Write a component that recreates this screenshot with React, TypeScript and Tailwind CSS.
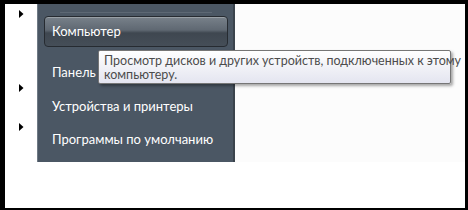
const FONT = { fontFamily: 'Lato, "Noto Sans", "DejaVu Sans", sans-serif' }

const ITEMS = [
  { label: 'Панель управления', h: 'h-[36px]' },
  { label: 'Устройства и принтеры', h: 'h-[34px]' },
  { label: 'Программы по умолчанию', h: 'h-[33px]' },
]

function Arrow({ className }: { className: string }) {
  return (
    <svg width="5" height="8" viewBox="0 0 5 8" className={className}>
      <path d="M0 0 L4.5 4 L0 8 Z" fill="#000" />
    </svg>
  )
}

export default function App() {
  return (
    <div className="w-[468px] h-[210px] bg-black pt-[4px] pl-[5px] pr-[3px] pb-[2px]" style={FONT}>
      <div className="relative w-full h-full bg-white flex items-start">
        {/* стрелки слева */}
        <div className="w-[32px] h-[158px] relative">
          <Arrow className="absolute left-[14px] top-[6px]" />
          <Arrow className="absolute left-[14px] top-[80px]" />
          <Arrow className="absolute left-[14px] top-[119px]" />
        </div>

        {/* тёмная панель меню */}
        <div className="w-[198px] h-[158px] bg-[#4b5764] border-l border-l-[#6f7a85] border-r-2 border-r-[#3a434c] flex flex-col pt-[8px] pl-[6px] pr-[5px]">
          <div className="h-px mx-[16px] bg-[#5d6874]" />
          <div className="mt-[3px] h-[31px] rounded-[4px] border border-[#262b31] bg-[linear-gradient(to_bottom,#78818a_0%,#5f6872_45%,#3f4750_55%,#454e58_100%)] shadow-[inset_0_1px_0_rgba(255,255,255,0.25)] flex items-center pl-[7px]">
            <span className="text-[13px] text-white leading-none">Компьютер</span>
          </div>
          {ITEMS.map(it => (
            <div key={it.label} className={`${it.h} flex items-end pl-[8px] pb-[4px]`}>
              <span className="text-[13px] text-white leading-none whitespace-nowrap">{it.label}</span>
            </div>
          ))}
        </div>

        {/* правая часть */}
        <div className="flex-1 h-[158px] bg-[#fcfcfc]" />

        {/* подсказка */}
        <div className="absolute z-10 left-[93px] top-[46px] w-[353px] h-[34px] border border-[#767676] rounded-[2px] bg-[linear-gradient(to_bottom,#ffffff,#e4e5f0)] shadow-[2px_2px_3px_rgba(0,0,0,0.35)] pl-[5px] pt-[3px]">
          <p className="text-[12.5px] leading-[14px] text-[#4c4c4c] whitespace-nowrap">
            Просмотр дисков и других устройств, подключенных к этому
            <br />
            компьютеру.
          </p>
        </div>
      </div>
    </div>
  )
}
